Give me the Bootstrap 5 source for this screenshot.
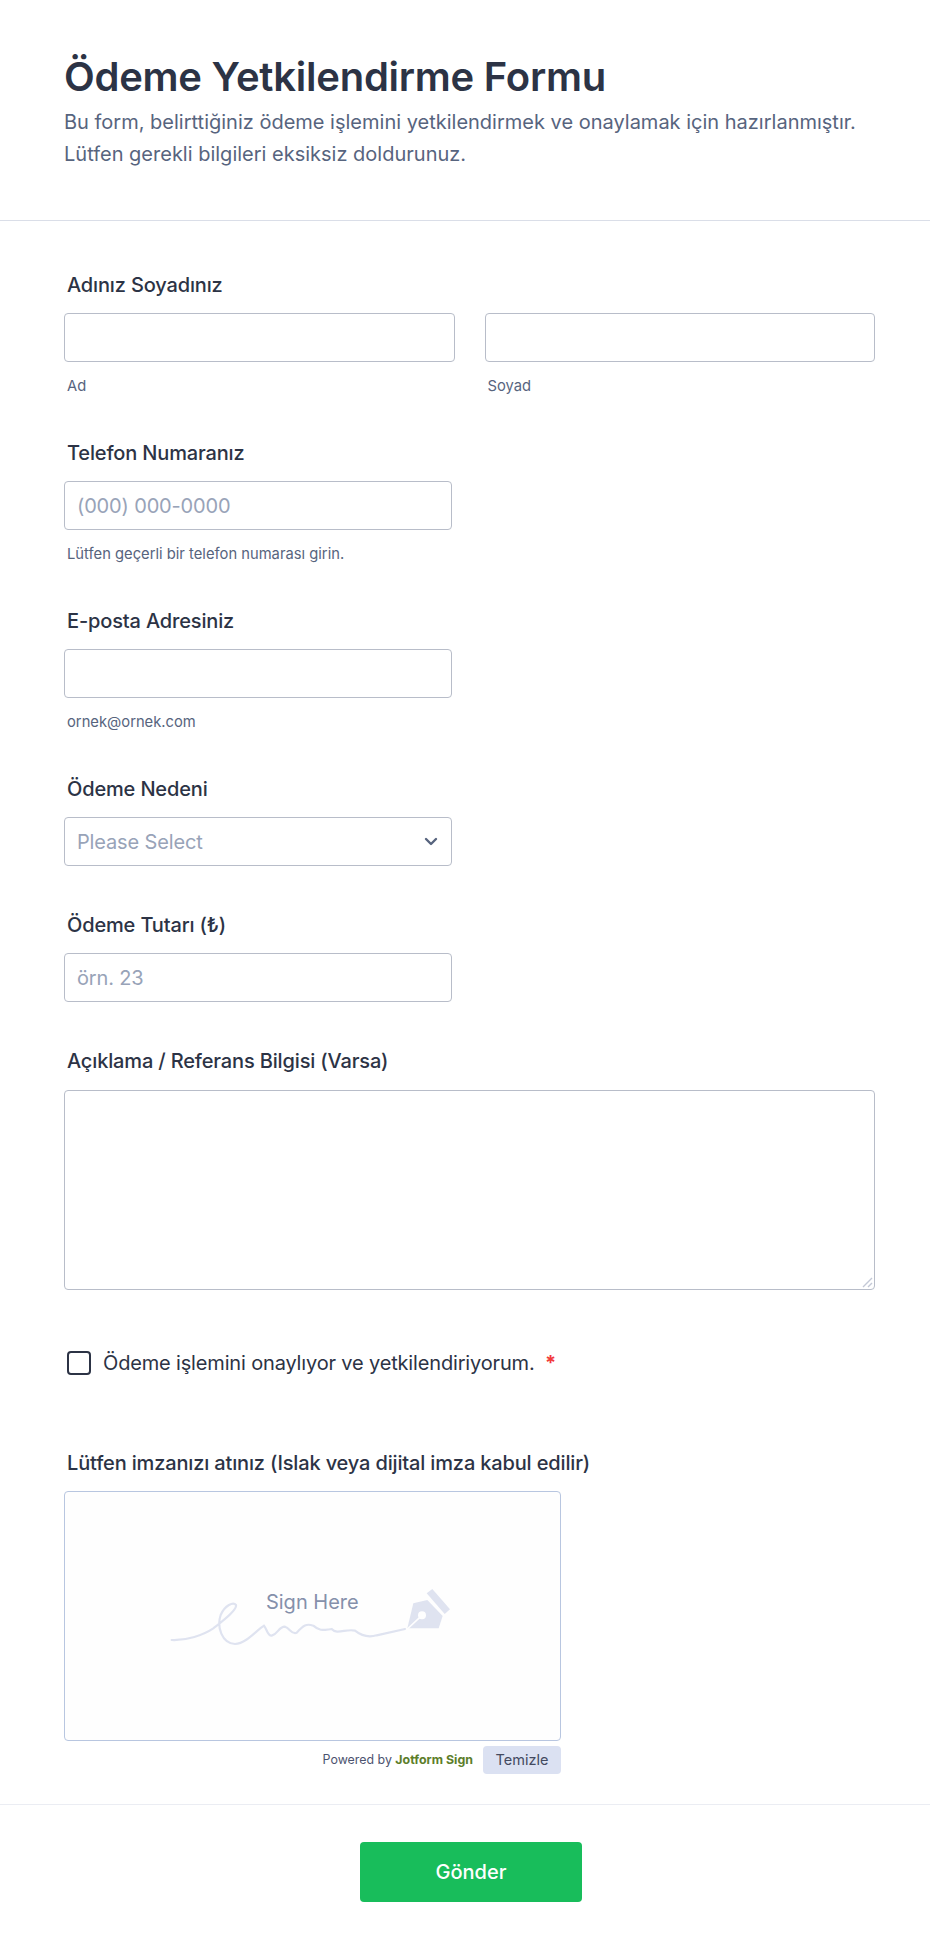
<!DOCTYPE html>
<html lang="tr">
<head>
<meta charset="utf-8">
<title>Ödeme Yetkilendirme Formu</title>
<link href="https://cdn.jsdelivr.net/npm/bootstrap@5.3.0/dist/css/bootstrap.min.css" rel="stylesheet">
<style>
body{font-family:Inter,"Liberation Sans",sans-serif;background:#fff;color:#2c3345;}
.form-head{padding:50px 55px 0 64px;border-bottom:1px solid #dadee8;height:221px;}
.form-title{font-size:40px;font-weight:600;line-height:54px;margin:0;color:#2c3345;letter-spacing:-.25px;}
.form-desc{font-size:20px;line-height:32px;color:#57647e;margin:2px 0 0;}
.form-body{padding:50px 55px 0 64px;}
.q-label{font-size:20px;font-weight:500;line-height:28px;color:#2c3345;margin:0 0 14px 3px;display:block;letter-spacing:-.15px;}
.q-label-area{margin-bottom:15px;}
.q-block{margin-bottom:45px;}
.q-block-help{margin-bottom:43px;}
.q-input.form-control,.q-input.form-select{height:49px;border:1px solid #b8bdc9;border-radius:4px;font-size:20px;letter-spacing:-.15px;color:#2c3345;padding:0 12px;box-shadow:none;}
.q-input::placeholder{color:#98a3b8;opacity:1;}
.q-input.form-select{color:#98a3b8;background-image:url("data:image/svg+xml,%3csvg xmlns='http://www.w3.org/2000/svg' viewBox='0 0 14 9'%3e%3cpath fill='none' stroke='%2357647e' stroke-linecap='round' stroke-linejoin='round' stroke-width='2.4' d='M2 2l5 5 5-5'/%3e%3c/svg%3e");background-position:right 13px center;background-size:14px 9px;}
.half-gap{--bs-gutter-x:30px;}
.half-w{width:388px;}
.q-sub{font-size:14.75px;line-height:20px;color:#57647e;margin:14px 0 0 3px;}
.q-area.form-control{height:200px;border:1px solid #b8bdc9;border-radius:4px;box-shadow:none;}
.q-area::-webkit-resizer{background:url("data:image/svg+xml,%3csvg xmlns='http://www.w3.org/2000/svg' viewBox='0 0 15 15'%3e%3cpath fill='none' stroke='%23c3c8d6' stroke-width='1.4' d='M4 13L13 4M9 13L13 9'/%3e%3c/svg%3e") no-repeat;}
.q-checkrow{padding:14px 0 0 3px;margin-bottom:72px;gap:12px;}
.q-check.form-check-input{width:24px;height:24px;border:2px solid #2c3345;border-radius:4px;margin:0;flex:none;}
.q-checktext{font-size:20px;line-height:28px;color:#2c3345;letter-spacing:-.16px;}
.q-star{color:#f23a3c;font-weight:700;margin-left:5px;}
.sign-box{width:497px;height:250px;border:1px solid #b8c6e0;border-radius:4px;background:#fefefe;padding:18px 5px 0 0;}
.sign-svg{width:320px;height:130px;}
.sign-hint{font-family:Inter,"Liberation Sans",sans-serif;font-size:60px;fill:#8590ab;}
.sign-foot{width:497px;height:28px;margin-top:5px;gap:10px;}
.sign-power{font-size:12.4px;color:#4c536f;}
.sign-brand{font-weight:700;color:#5c7e2a;}
.sign-clear.btn{background:#dbe1f2;color:#434a60;font-size:14.5px;border:0;border-radius:4px;padding:0;width:78px;height:28px;line-height:28px;}
.form-foot{border-top:1px solid #ebedf3;margin-top:30px;padding:37px 0 0 12px;}
.send-btn.btn{background:#18bd5b;color:#fff;font-size:20px;font-weight:500;width:222px;height:60px;border:0;border-radius:4px;}
</style>
</head>
<body>
<header class="form-head">
  <h1 class="form-title">Ödeme Yetkilendirme Formu</h1>
  <p class="form-desc">Bu form, belirttiğiniz ödeme işlemini yetkilendirmek ve onaylamak için hazırlanmıştır.<br>Lütfen gerekli bilgileri eksiksiz doldurunuz.</p>
</header>
<form class="form-body">
  <div class="q-block-help">
    <label class="q-label">Adınız Soyadınız</label>
    <div class="row half-gap">
      <div class="col-6"><input class="form-control q-input" type="text"><div class="q-sub">Ad</div></div>
      <div class="col-6"><input class="form-control q-input" type="text"><div class="q-sub">Soyad</div></div>
    </div>
  </div>
  <div class="q-block-help">
    <label class="q-label">Telefon Numaranız</label>
    <input class="form-control q-input half-w" type="tel" placeholder="(000) 000-0000">
    <div class="q-sub">Lütfen geçerli bir telefon numarası girin.</div>
  </div>
  <div class="q-block-help">
    <label class="q-label">E-posta Adresiniz</label>
    <input class="form-control q-input half-w" type="email">
    <div class="q-sub">ornek@ornek.com</div>
  </div>
  <div class="q-block">
    <label class="q-label">Ödeme Nedeni</label>
    <select class="form-select q-input half-w"><option>Please Select</option></select>
  </div>
  <div class="q-block">
    <label class="q-label">Ödeme Tutarı (₺)</label>
    <input class="form-control q-input half-w" type="text" placeholder="örn. 23">
  </div>
  <div class="q-block">
    <label class="q-label q-label-area">Açıklama / Referans Bilgisi (Varsa)</label>
    <textarea class="form-control q-area"></textarea>
  </div>
  <div class="d-flex align-items-center q-checkrow">
    <input class="form-check-input q-check" type="checkbox" aria-label="Onay">
    <span class="q-checktext">Ödeme işlemini onaylıyor ve yetkilendiriyorum. <span class="q-star">*</span></span>
  </div>
  <div>
    <label class="q-label">Lütfen imzanızı atınız (Islak veya dijital imza kabul edilir)</label>
    <div class="sign-box d-flex align-items-center justify-content-center">
      <svg class="sign-svg" viewBox="0 0 960 390" fill="none">
        <text class="sign-hint" x="487" y="146" text-anchor="middle" font-size="60">Sign Here</text>
        <path d="M65 240C110 242 160 225 190 205C215 185 262 150 258 135C250 125 225 135 212 165C200 200 215 250 255 252C290 250 320 210 342 197C350 205 352 228 365 227C385 222 385 200 405 200C420 205 425 225 440 218C460 195 470 190 490 197C510 215 520 210 545 207C560 225 590 205 615 212C640 232 660 232 680 226L765 207" stroke="#dfe3f0" stroke-width="6.5" stroke-linecap="round"/>
        <path d="M790 130L832 120L878 168L866 205H772Z" fill="#dfe3f0"/>
        <circle cx="816" cy="166" r="12" fill="#fefefe"/>
        <path d="M772 207L812 170" stroke="#fefefe" stroke-width="5"/>
        <path d="M830 100L847 87L900 148L884 162Z" fill="#dfe3f0"/>
      </svg>
    </div>
    <div class="sign-foot d-flex justify-content-end align-items-center">
      <span class="sign-power">Powered by <span class="sign-brand">Jotform Sign</span></span>
      <button type="button" class="btn sign-clear">Temizle</button>
    </div>
  </div>
</form>
<footer class="form-foot d-flex justify-content-center">
  <button type="button" class="btn send-btn">Gönder</button>
</footer>
</body>
</html>
